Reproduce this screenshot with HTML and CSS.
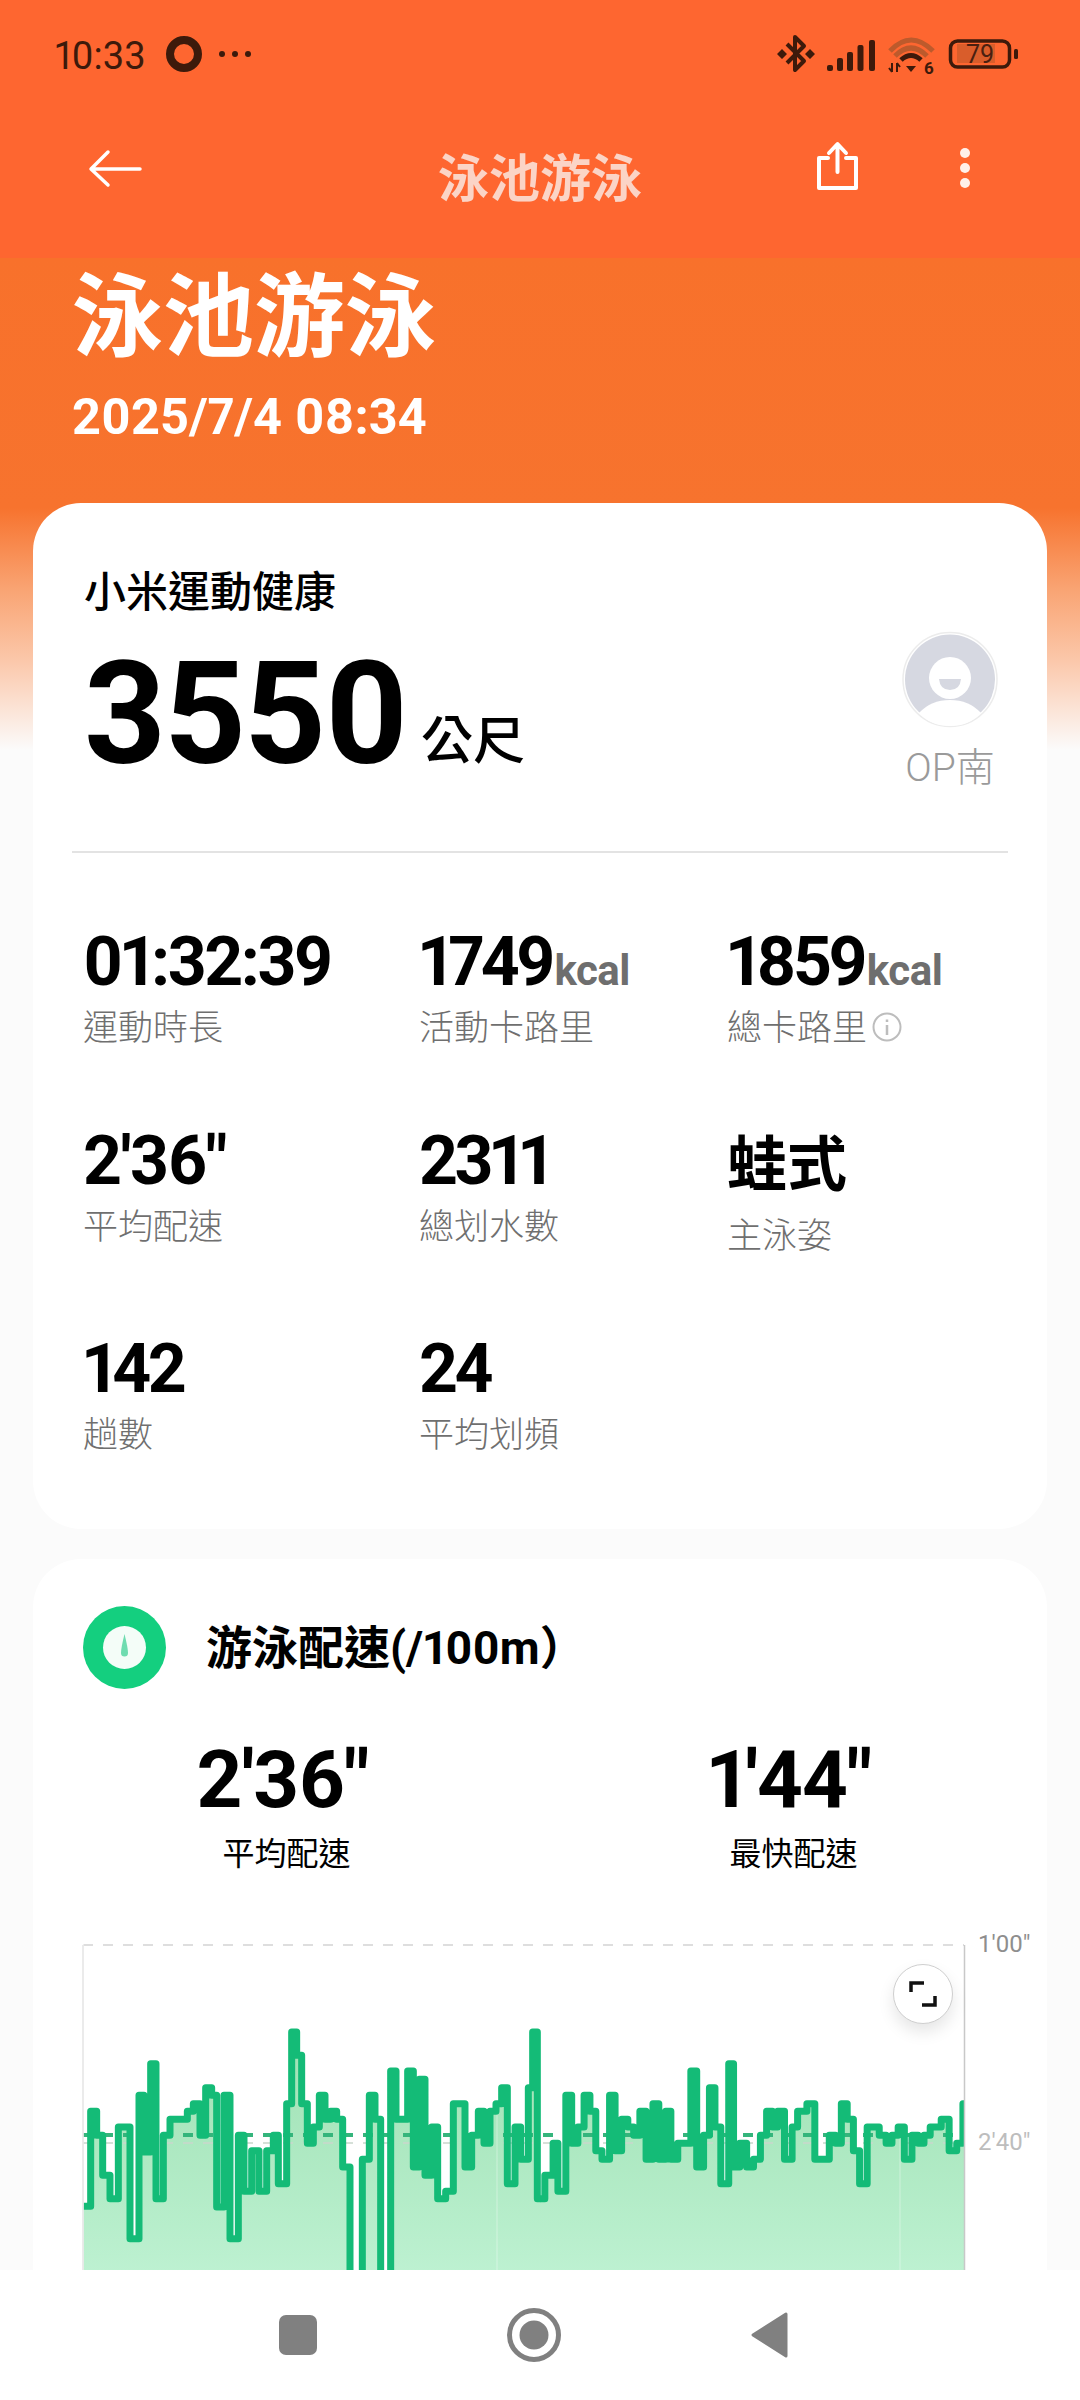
FILE: index.html
```html
<!DOCTYPE html>
<html lang="zh-Hant">
<head>
<meta charset="utf-8">
<title>泳池游泳</title>
<link rel="stylesheet" href="styles.css">
</head>
<body>
<div class="app">
  <header class="appbar">
    <div class="status">
      <span class="clock">10:33</span>
      <svg class="st-ring" viewBox="164 34 90 40" width="90" height="40"><circle cx="184" cy="54" r="14" fill="none" stroke="#3d1a0b" stroke-width="8"/><circle cx="222" cy="54" r="3" fill="#3d1a0b"/><circle cx="235" cy="54" r="3" fill="#3d1a0b"/><circle cx="248" cy="54" r="3" fill="#3d1a0b"/></svg>
      <svg class="st-right" viewBox="770 30 256 48" width="256" height="48">
        <path d="M787,44 L804,61 L795,70 V37 L804,46 L787,63" fill="none" stroke="#3d1a0b" stroke-width="4" stroke-linejoin="round"/>
        <path d="M782,49 l5,5 -5,5 -5,-5z M810,49 l5,5 -5,5 -5,-5z" fill="#3d1a0b"/>
        <g fill="#3d1a0b"><rect x="827" y="65" width="6" height="6" rx="2"/><rect x="837" y="58" width="6" height="13" rx="2"/><rect x="847" y="52" width="6" height="19" rx="2"/><rect x="857.500" y="45" width="6" height="26" rx="2"/><rect x="869" y="40" width="6" height="31" rx="2"/></g>
        <path d="M890,51 Q911,29 933,51" fill="none" stroke="#bd5a2c" stroke-width="5"/>
        <path d="M895,56 Q911,40 927,56" fill="none" stroke="#bd5a2c" stroke-width="5"/>
        <path d="M901,60 Q911,51 921,60" fill="none" stroke="#3d1a0b" stroke-width="5"/>
        <path d="M906,66 h10 l-5,6z" fill="#3d1a0b"/>
        <path d="M892,63 v9 M892,72 l-3,-4 M897,72 v-9 M897,63 l3,4" fill="none" stroke="#3d1a0b" stroke-width="2"/>
        <text class="st-six" x="924" y="74">6</text>
        <rect x="957" y="44" width="38" height="19" fill="#d95d2b"/>
        <rect x="950.500" y="41" width="59" height="26" rx="7" fill="none" stroke="#3d1a0b" stroke-width="3.500"/>
        <rect x="1014" y="49" width="4" height="10" rx="1.500" fill="#3d1a0b"/>
        <text class="st-batt" x="980" y="63">79</text>
      </svg>
    </div>
    <div class="toolbar">
      <div class="tb-left">
        <svg viewBox="86 148 58 42" width="58" height="42"><path d="M140,169 H92 M108,152 L91,169 L108,185" fill="none" stroke="#fff" stroke-width="3.500" stroke-linecap="round" stroke-linejoin="round"/></svg>
      </div>
      <div class="tb-title">泳池游泳</div>
      <div class="tb-right">
        <svg viewBox="814 140 48 52" width="48" height="52"><path d="M828,158 H819 V188 H856 V158 H846 M837.500,172 V145 M829,153 L837.500,144 L846,153" fill="none" stroke="#fff" stroke-width="4" stroke-linejoin="round" stroke-linecap="round"/></svg>
        <svg viewBox="955 146 20 44" width="20" height="44"><circle cx="965" cy="153" r="5" fill="#fff" opacity=".9"/><circle cx="965" cy="168" r="5" fill="#fff" opacity=".9"/><circle cx="965" cy="183" r="5" fill="#fff" opacity=".9"/></svg>
      </div>
    </div>
  </header>

  <main class="scroll">
    <section class="hero">
      <h1 class="hero-title">泳池游泳</h1>
      <p class="hero-date">2025/7/4 08:34</p>
    </section>

    <section class="card card-summary">
      <div class="top">
        <div>
          <div class="brand">小米運動健康</div>
          <div class="distance"><span class="distance-num">3550</span><span class="distance-unit">公尺</span></div>
        </div>
        <div class="user">
          <svg viewBox="-2 -2 96 97" width="96" height="97">
            <circle cx="46" cy="46.500" r="47" fill="#fff" stroke="#ececec" stroke-width="1.500"/>
            <circle cx="46" cy="46.500" r="45" fill="#d6d8e1"/>
            <path d="M15,80 Q27,67 46,67 Q65,67 77,80 Q65,93 46,93 Q27,93 15,80z" fill="#fff"/>
            <circle cx="46" cy="45" r="21" fill="#fff"/>
            <path d="M35,46 H57 Q56,57 46,57 Q36,57 35,46z" fill="#d6d8e1"/>
          </svg>
          <div class="user-name">OP南</div>
        </div>
      </div>
      <hr class="divider">
      <div class="stats">
        <div class="stat"><div class="val val-time">01:32:39</div><div class="lab">運動時長</div></div>
        <div class="stat"><div class="val">1749<span class="unit">kcal</span></div><div class="lab">活動卡路里</div></div>
        <div class="stat"><div class="val">1859<span class="unit">kcal</span></div><div class="lab lab-info">總卡路里<svg viewBox="0 0 30 30" width="30" height="30"><circle cx="15" cy="15" r="13.500" fill="none" stroke="#bdbdbd" stroke-width="2"/><path d="M15,13 V23 M15,7.500 V10" stroke="#bdbdbd" stroke-width="2.500"/></svg></div></div>
        <div class="stat"><div class="val val-pace">2'36"</div><div class="lab">平均配速</div></div>
        <div class="stat"><div class="val">2311</div><div class="lab">總划水數</div></div>
        <div class="stat"><div class="val val-cjk">蛙式</div><div class="lab">主泳姿</div></div>
        <div class="stat"><div class="val">142</div><div class="lab">趟數</div></div>
        <div class="stat"><div class="val">24</div><div class="lab">平均划頻</div></div>
      </div>
    </section>

    <section class="card card-pace">
      <div class="pace-head">
        <svg viewBox="0 0 83 83" width="83" height="83"><circle cx="41.500" cy="41.500" r="41.500" fill="#14cf7f"/><circle cx="41.500" cy="41.500" r="21.500" fill="#f4fdf8"/><path d="M41.500,28 Q45,42 45,47 A3.500,3.500 0 0 1 38,47 Q38,42 41.500,28z" fill="#6fdcb0"/></svg>
        <h2 class="pace-title">游泳配速(/100m）</h2>
      </div>
      <div class="pace-stats">
        <div class="pace-stat"><div class="pace-val">2'36"</div><div class="pace-lab">平均配速</div></div>
        <div class="pace-stat"><div class="pace-val">1'44"</div><div class="pace-lab">最快配速</div></div>
      </div>
      <div class="chart">
        <svg class="chart-svg" viewBox="33 1920 1014 400" width="1014" height="400">
          <defs>
            <linearGradient id="area" gradientUnits="userSpaceOnUse" x1="0" y1="300" x2="0" y2="1050">
              <stop offset="0" stop-color="#9de0b2"/>
              <stop offset="1" stop-color="#bdf1d1"/>
            </linearGradient>
            <clipPath id="plot"><rect x="83.500" y="1930" width="881" height="380"/></clipPath>
          </defs>
          <g clip-path="url(#plot)">
            <g transform="translate(60,1920) scale(.33333)">
              <polygon fill="url(#area)" points="70,1100 70,853 92,853 92,568 110,568 110,640 128,640 128,760 150,760 150,830 175,830 175,615 210,615 210,950 237,950 237,520 252,520 252,690 272,690 272,425 288,425 288,830 310,830 310,640 330,640 330,592 382,592 382,568 400,568 400,545 420,545 420,640 437,640 437,497 455,497 455,520 470,520 470,855 492,855 492,520 510,520 510,950 535,950 535,640 552,640 552,808 575,808 575,686 597,686 597,808 620,808 620,686 640,686 640,640 655,640 655,785 680,785 680,545 695,545 695,330 710,330 710,400 725,400 725,545 742,545 742,664 760,664 760,615 778,615 778,520 795,520 795,592 812,592 812,568 830,568 830,592 848,592 848,735 870,735 870,1100 907,1100 907,712 928,712 928,520 945,520 945,592 962,592 962,1100 992,1100 992,447 1008,447 1008,592 1043,592 1043,447 1060,447 1060,735 1078,735 1078,472 1095,472 1095,760 1115,760 1115,615 1133,615 1133,830 1157,830 1157,808 1180,808 1180,545 1215,545 1215,735 1235,735 1235,640 1255,640 1255,568 1272,568 1272,664 1290,664 1290,568 1308,568 1308,545 1325,545 1325,497 1342,497 1342,785 1365,785 1365,615 1382,615 1382,712 1405,712 1405,497 1418,497 1418,330 1432,330 1432,830 1441,830 1441,1100"/>
            </g>
            <g transform="translate(540,1920) scale(.34439,.33333)">
              <polygon fill="url(#area)" points="0,1100 0,830 14,830 14,760 38,760 38,664 52,664 52,808 75,808 75,520 92,520 92,664 110,664 110,615 128,615 128,520 145,520 145,568 162,568 162,686 180,686 180,712 202,712 202,520 218,520 218,686 237,686 237,592 255,592 255,615 272,615 272,640 290,640 290,568 308,568 308,712 328,712 328,545 345,545 345,712 365,712 365,568 380,568 380,712 400,712 400,664 438,664 438,447 455,447 455,735 475,735 475,640 492,640 492,497 508,497 508,615 525,615 525,785 548,785 548,425 562,425 562,735 580,735 580,664 600,664 600,735 620,735 620,712 640,712 640,640 658,640 658,568 675,568 675,615 690,615 690,568 710,568 710,712 732,712 732,615 748,615 748,568 775,568 775,545 798,545 798,712 840,712 840,640 858,640 858,664 875,664 875,545 892,545 892,592 910,592 910,686 928,686 928,785 950,785 950,615 985,615 985,640 1005,640 1005,664 1022,664 1022,640 1040,640 1040,615 1058,615 1058,712 1080,712 1080,640 1098,640 1098,664 1115,664 1115,640 1133,640 1133,615 1165,615 1165,592 1188,592 1188,686 1210,686 1210,664 1228,664 1228,545 1240,545 1240,1100"/>
            </g>
            <path d="M497,2050 V2300 M900,2050 V2300" stroke="#fff" stroke-opacity=".25" stroke-width="1.500"/>
            <path d="M83,1943 H964" stroke="#dedede" stroke-width="2" stroke-dasharray="10 10"/>
            <path d="M83,2141 H964" stroke="#c9d6cc" stroke-width="1.500" stroke-dasharray="10 10"/>
            <path d="M83,2133 H964" stroke="#35b57c" stroke-width="4" stroke-dasharray="10 10"/>
            <g transform="translate(60,1920) scale(.33333)">
              <polyline class="pace-line" points="70,853 92,853 92,568 110,568 110,640 128,640 128,760 150,760 150,830 175,830 175,615 210,615 210,950 237,950 237,520 252,520 252,690 272,690 272,425 288,425 288,830 310,830 310,640 330,640 330,592 382,592 382,568 400,568 400,545 420,545 420,640 437,640 437,497 455,497 455,520 470,520 470,855 492,855 492,520 510,520 510,950 535,950 535,640 552,640 552,808 575,808 575,686 597,686 597,808 620,808 620,686 640,686 640,640 655,640 655,785 680,785 680,545 695,545 695,330 710,330 710,400 725,400 725,545 742,545 742,664 760,664 760,615 778,615 778,520 795,520 795,592 812,592 812,568 830,568 830,592 848,592 848,735 870,735 870,1100 907,1100 907,712 928,712 928,520 945,520 945,592 962,592 962,1100 992,1100 992,447 1008,447 1008,592 1043,592 1043,447 1060,447 1060,735 1078,735 1078,472 1095,472 1095,760 1115,760 1115,615 1133,615 1133,830 1157,830 1157,808 1180,808 1180,545 1215,545 1215,735 1235,735 1235,640 1255,640 1255,568 1272,568 1272,664 1290,664 1290,568 1308,568 1308,545 1325,545 1325,497 1342,497 1342,785 1365,785 1365,615 1382,615 1382,712 1405,712 1405,497 1418,497 1418,330 1432,330 1432,830 1441,830"/>
            </g>
            <g transform="translate(540,1920) scale(.34439,.33333)">
              <polyline class="pace-line" points="0,830 14,830 14,760 38,760 38,664 52,664 52,808 75,808 75,520 92,520 92,664 110,664 110,615 128,615 128,520 145,520 145,568 162,568 162,686 180,686 180,712 202,712 202,520 218,520 218,686 237,686 237,592 255,592 255,615 272,615 272,640 290,640 290,568 308,568 308,712 328,712 328,545 345,545 345,712 365,712 365,568 380,568 380,712 400,712 400,664 438,664 438,447 455,447 455,735 475,735 475,640 492,640 492,497 508,497 508,615 525,615 525,785 548,785 548,425 562,425 562,735 580,735 580,664 600,664 600,735 620,735 620,712 640,712 640,640 658,640 658,568 675,568 675,615 690,615 690,568 710,568 710,712 732,712 732,615 748,615 748,568 775,568 775,545 798,545 798,712 840,712 840,640 858,640 858,664 875,664 875,545 892,545 892,592 910,592 910,686 928,686 928,785 950,785 950,615 985,615 985,640 1005,640 1005,664 1022,664 1022,640 1040,640 1040,615 1058,615 1058,712 1080,712 1080,640 1098,640 1098,664 1115,664 1115,640 1133,640 1133,615 1165,615 1165,592 1188,592 1188,686 1210,686 1210,664 1228,664 1228,545 1240,545"/>
            </g>
          </g>
          <path d="M83,1943 V2300" stroke="#e4e4e4" stroke-width="1.500"/>
          <path d="M964.500,1943 V2300" stroke="#c8c8c8" stroke-width="1.500"/>
          <text class="axis axis-top" x="978" y="1950">1'00"</text>
          <text class="axis axis-mid" x="978" y="2148">2'40"</text>
        </svg>
        <button class="expand" type="button" aria-label="expand">
          <svg viewBox="0 0 30 30" width="30" height="30"><path d="M3,13 V4 H16 M27,17 V26 H14" fill="none" stroke="#111" stroke-width="3.500"/></svg>
        </button>
      </div>
    </section>
  </main>

  <nav class="navbar">
    <svg viewBox="0 0 38 40" width="38" height="40"><rect width="38" height="40" rx="7" fill="#808080"/></svg>
    <svg viewBox="0 0 54 54" width="54" height="54"><circle cx="27" cy="27" r="24.500" fill="none" stroke="#808080" stroke-width="5"/><circle cx="27" cy="27" r="14.500" fill="#808080"/></svg>
    <svg viewBox="0 0 37 46" width="37" height="46"><path d="M35,2 V44 L2,23z" fill="#808080" stroke="#808080" stroke-width="3" stroke-linejoin="round"/></svg>
  </nav>
</div>
</body>
</html>
```

FILE: styles.css
```css
* { box-sizing: border-box; }
html, body { margin: 0; padding: 0; }
body {
  width: 1080px;
  height: 2400px;
  overflow: hidden;
  background: #fff;
  font-family: Roboto, "Noto Sans CJK TC", sans-serif;
  color: #000;
  font-variant-numeric: proportional-nums;
}
.app { display: flex; flex-direction: column; height: 2400px; }

/* app bar */
.appbar { height: 258px; flex: none; background: #fe6630; }
.status { display: flex; align-items: center; height: 108px; padding-left: 55px; }
.clock { font-size: 38px; color: #3d1a0b; line-height: 108px; width: 109px; padding-top: 3px; }
.st-ring { flex: none; }
.st-right { flex: none; margin-left: auto; margin-right: 54px; }
.st-six { font: 700 17px Roboto, sans-serif; fill: #3d1a0b; }
.st-batt { font: 400 25px Roboto, sans-serif; fill: #4a2010; text-anchor: middle; }

.toolbar { display: grid; grid-template-columns: 1fr auto 1fr; height: 150px; }
.tb-left { padding: 40px 0 0 86px; }
.tb-title {
  font-size: 51px;
  font-weight: 700;
  line-height: 60px;
  color: #fbd4c6;
  padding-top: 42px;
}
.tb-right { display: flex; justify-content: flex-end; align-items: flex-start; padding: 32px 105px 0 0; gap: 93px; }
.tb-right svg:last-child { margin-top: 6px; }

/* scrolling body */
.scroll {
  flex: 1;
  min-height: 0;
  overflow: hidden;
  background: linear-gradient(to bottom, #f8712b 0, #f7732e 250px, #f9a372 330px, #fbc6a8 400px, #fbfbfb 492px);
}
.hero { padding: 10px 0 0 72px; height: 245px; }
.hero-title { margin: 0; font-size: 91px; font-weight: 700; line-height: 100px; color: #fff; }
.hero-date { margin: 19px 0 0; font-size: 50.500px; font-weight: 700; line-height: 60px; color: #fff; }

.card { margin: 0 33px; background: #fff; border-radius: 48px; }
.card-summary { padding: 65px 0 68px; }
.top { display: flex; justify-content: space-between; padding: 0 49px 0 51px; height: 218px; }
.brand { font-size: 42px; font-weight: 500; line-height: 50px; }
.distance { margin-top: 21px; display: flex; align-items: flex-end; line-height: 150px; }
.distance-num { font-size: 143px; font-weight: 700; letter-spacing: -2px; }
.distance-unit { font-size: 52px; font-weight: 500; margin: 0 0 21px 14px; line-height: 1; }
.user { display: flex; flex-direction: column; align-items: center; padding-top: 63px; }
.user svg { flex: none; }
.user-name { font-size: 39px; line-height: 50px; color: #9a9a9a; font-weight: 300; margin-top: 15px; white-space: nowrap; }
.divider { margin: 65px 39px 0; height: 2px; border: 0; background: #e3e3e3; }

.stats { display: grid; grid-template-columns: 336px 308px 1fr; row-gap: 67px; padding: 69px 0 0 50px; }
.val { font-size: 68px; font-weight: 700; line-height: 80px; letter-spacing: -3.500px; white-space: nowrap; }
.val-time { letter-spacing: -2.500px; }
.val-pace { letter-spacing: -1.500px; }
.unit { font-size: 42px; font-weight: 700; color: #6e6e6e; letter-spacing: -.5px; margin-left: 2px; line-height: 1; }
.val-cjk { font-size: 60px; line-height: 89px; letter-spacing: 0; }
.lab { font-size: 35px; line-height: 50px; margin-top: 2px; color: #6f6f6f; font-weight: 300; }
.lab-info { display: flex; align-items: center; gap: 5px; }
.lab-info svg { margin-top: -4px; }

.card-pace { margin-top: 30px; padding-top: 47px; height: 900px; }
.pace-head { display: flex; align-items: center; padding-left: 50px; gap: 40px; }
.pace-title { margin: 0; font-size: 46px; font-weight: 700; line-height: 60px; white-space: nowrap; }
.pace-stats { display: grid; grid-template-columns: 1fr 1fr; margin-top: 41px; text-align: center; }
.pace-val { font-size: 80px; font-weight: 700; line-height: 100px; letter-spacing: -1px; padding-right: 8px; }
.pace-lab { font-size: 32px; line-height: 48px; }

.chart { position: relative; margin-top: 44px; }
.chart-svg { display: block; }
.pace-line { fill: none; stroke: #14bb77; stroke-width: 7px; stroke-linejoin: round; vector-effect: non-scaling-stroke; }
.axis { font: 400 24px Roboto, sans-serif; }
.axis-top { fill: #8e8e8e; }
.axis-mid { fill: #bdbdbd; }
.expand {
  position: absolute;
  left: 860px;
  top: 42px;
  width: 60px;
  height: 60px;
  padding: 0;
  display: flex;
  align-items: center;
  justify-content: center;
  border: 1px solid #cfcfcf;
  border-radius: 50%;
  background: #fff;
  box-shadow: 0 8px 16px rgba(0, 0, 0, .1);
}

.navbar {
  flex: none;
  height: 130px;
  background: #fff;
  display: flex;
  align-items: center;
  justify-content: center;
  gap: 190px;
  padding-right: 13px;
}
```
